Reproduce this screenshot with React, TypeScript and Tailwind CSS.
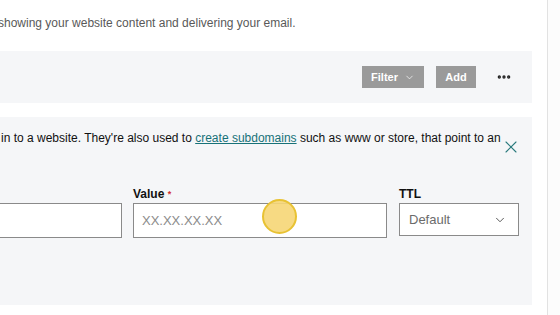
import { ChevronDown, X, MoreHorizontal } from 'lucide-react'

export default function App() {
  return (
    <div className="w-[560px] h-[315px] overflow-hidden bg-white flex font-['Liberation_Sans',Arial,sans-serif]">
      {/* main column */}
      <div className="w-[532px] shrink-0 flex flex-col">
        <p className="mt-[15px] -ml-[2px] text-[12px] leading-[16px] text-[#595959] whitespace-nowrap">
          showing your website content and delivering your email.
        </p>

        {/* toolbar */}
        <div className="mt-[20px] h-[52px] bg-[#f5f6f8] flex items-center justify-end pr-[20px]">
          <button className="w-[62px] h-[22px] bg-[#9a9a9a] text-white text-[11px] font-bold flex items-center justify-center gap-[6px]">
            Filter <ChevronDown size={11} strokeWidth={1.5} />
          </button>
          <button className="ml-[12px] w-[40px] h-[22px] bg-[#9a9a9a] text-white text-[11px] font-bold">
            Add
          </button>
          <MoreHorizontal size={16} strokeWidth={3} className="ml-[20px] text-[#222]" />
        </div>

        {/* add record panel */}
        <div className="mt-[14px] h-[188px] bg-[#f5f6f8] flex flex-col">
          <div className="mt-[13px] flex items-start">
            <p className="shrink-0 ml-[1px] text-[12px] leading-[16px] text-[#111] whitespace-nowrap">
              in to a website. They're also used to{' '}
              <a href="#" className="text-[#177278] underline">create subdomains</a>{' '}
              such as www or store, that point to an
            </p>
            <button className="ml-auto mr-[11px] mt-[7px] text-[#2a7a7d]">
              <X size={20} strokeWidth={1.3} />
            </button>
          </div>

          <div className="mt-[26px] flex gap-[11px]">
            <div className="flex flex-col -ml-[40px]">
              <span className="h-[20px]" />
              <div className="w-[162px] h-[35px] border border-[#8a8a8a] bg-white" />
            </div>
            <div className="flex flex-col">
              <span className="text-[12px] font-bold leading-[22px] text-[#111]">
                Value <span className="text-[#d32f2f] text-[9px] align-top">*</span>
              </span>
              <div className="relative -mt-[2px] w-[254px] h-[35px] border border-[#8a8a8a] bg-white flex items-center px-[8px] text-[13px] text-[#8b8b8b]">
                XX.XX.XX.XX
                <span className="absolute left-[128px] top-[-5px] w-[35px] h-[35px] rounded-full bg-[#f6d675]/90 border-2 border-[#e8c233]" />
              </div>
            </div>
            <div className="flex flex-col ml-[1px]">
              <span className="text-[12px] font-bold leading-[22px] text-[#111]">TTL</span>
              <div className="-mt-[2px] w-[120px] h-[33px] border border-[#8a8a8a] bg-white flex items-center justify-between pl-[9px] pr-[11px] text-[13px] text-[#6b6b6b]">
                Default
                <ChevronDown size={14} strokeWidth={1.5} className="text-[#444]" />
              </div>
            </div>
          </div>
        </div>
      </div>

      {/* right sidebar */}
      <div className="ml-[15px] flex-1 border-l border-[#e2e2e2] bg-[#fcfcfc]" />
    </div>
  )
}
